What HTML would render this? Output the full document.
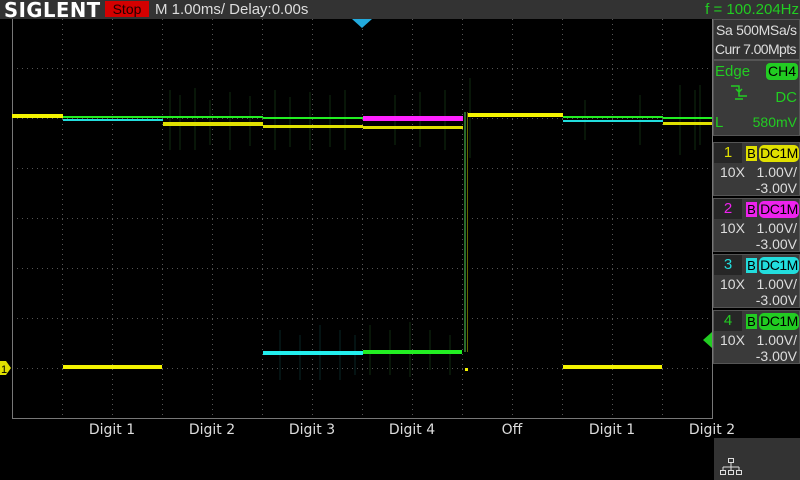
<!DOCTYPE html><html><head><style>
body{margin:0;width:800px;height:480px;background:#000;overflow:hidden;font-family:"DejaVu Sans","Liberation Sans",sans-serif;position:relative}
div{position:absolute;box-sizing:border-box}
.t{white-space:nowrap;line-height:1}
.L{font-family:"Liberation Sans",sans-serif}
.ch{left:713px;width:87px;height:54px;background:#3a3a3a;border:1px solid #555;font-family:"Liberation Sans",sans-serif}
.tab{left:0;top:0;width:28px;height:20px;background:#262626;font-size:15px;text-align:center;line-height:20px}
.b{left:32px;top:3px;width:11px;height:15px;font-size:13px;line-height:15px;text-align:center;color:#000}
.dc{left:45px;top:2px;width:40px;height:17px;border-radius:5px;font-size:14px;line-height:17px;text-align:center;color:#000;letter-spacing:-0.5px}
.r{color:#ddd;font-size:14px}
.rr{right:2px;text-align:right}
.lab{top:423px;color:#ddd;font-size:14px;width:100px;text-align:center}
</style></head><body>
<div style="left:0;top:0;width:800px;height:19px;background:#333"></div>
<div class="t" style="left:4px;top:0px;color:#fff;font-weight:bold;font-size:20px;letter-spacing:0.5px;font-family:'DejaVu Sans',sans-serif;transform:scaleX(0.98);transform-origin:left">SIGLENT</div>
<div style="left:105px;top:1px;width:44px;height:16px;background:#d40000;color:#200;font-size:14px;text-align:center;line-height:16px" class="L">Stop</div>
<div class="t L" style="left:155px;top:2px;color:#ddd;font-size:15px">M 1.00ms/ Delay:0.00s</div>
<div class="t L" style="right:1px;top:2px;color:#22cc22;font-size:15px">f = 100.204Hz</div>
<svg style="position:absolute;left:0;top:0" width="800" height="480">
<g stroke="#555" stroke-width="1" stroke-dasharray="1 4">
<line x1="62.5" y1="19" x2="62.5" y2="418"/><line x1="112.5" y1="19" x2="112.5" y2="418"/><line x1="162.5" y1="19" x2="162.5" y2="418"/><line x1="212.5" y1="19" x2="212.5" y2="418"/><line x1="262.5" y1="19" x2="262.5" y2="418"/><line x1="312.5" y1="19" x2="312.5" y2="418"/><line x1="362.5" y1="19" x2="362.5" y2="418"/><line x1="412.5" y1="19" x2="412.5" y2="418"/><line x1="462.5" y1="19" x2="462.5" y2="418"/><line x1="512.5" y1="19" x2="512.5" y2="418"/><line x1="562.5" y1="19" x2="562.5" y2="418"/><line x1="612.5" y1="19" x2="612.5" y2="418"/><line x1="662.5" y1="19" x2="662.5" y2="418"/>
<line x1="12" y1="68.5" x2="712" y2="68.5"/><line x1="12" y1="118.5" x2="712" y2="118.5"/><line x1="12" y1="168.5" x2="712" y2="168.5"/><line x1="12" y1="218.5" x2="712" y2="218.5"/><line x1="12" y1="268.5" x2="712" y2="268.5"/><line x1="12" y1="318.5" x2="712" y2="318.5"/><line x1="12" y1="368.5" x2="712" y2="368.5"/>
</g>
<path d="M12.5 19V418.5H712.5V19" stroke="#777" fill="none"/>
<g stroke-width="1" opacity="0.6">
<path d="M170 90v60M180 95v55M195 88v62M210 100v45M230 92v58M250 96v50M275 90v60M290 97v50M310 92v58M330 95v52M345 90v60M395 95v50M420 92v55M445 90v60M470 78v80M585 100v40M640 95v50M680 85v70M695 90v60M700 85v60" stroke="#1a4a1a"/>
<path d="M280 330v50M300 335v45M320 325v55M340 330v50M355 335v40" stroke="#0d4040"/>
<path d="M370 325v50M390 330v45M410 322v55M430 330v40M450 335v40" stroke="#1a4a1a"/>
</g>
<g>
<rect x="12" y="114" width="51" height="4" fill="#f4f400"/>
<rect x="63" y="116" width="100" height="2" fill="#22ee22"/><rect x="63" y="119" width="100" height="2" fill="#22dddd"/>
<rect x="163" y="116" width="100" height="2" fill="#22ee22"/><rect x="163" y="122" width="100" height="4" fill="#e0e000"/>
<rect x="263" y="117" width="100" height="2" fill="#22ee22"/><rect x="263" y="125" width="100" height="3" fill="#e0e000"/>
<rect x="363" y="116" width="100" height="5" fill="#ff22ff"/><rect x="363" y="126" width="100" height="3" fill="#e0e000"/>
<rect x="468" y="113" width="95" height="4" fill="#f4f400"/>
<rect x="563" y="116" width="100" height="2" fill="#22ee22"/><rect x="563" y="120" width="100" height="2" fill="#22dddd"/>
<rect x="663" y="117" width="49" height="2" fill="#22ee22"/><rect x="663" y="122" width="49" height="3" fill="#e0e000"/>
<rect x="464" y="112" width="2" height="240" fill="#2a6a2a"/><rect x="467" y="112" width="1" height="240" fill="#666600"/>
<rect x="63" y="365" width="99" height="4" fill="#f4f400"/>
<rect x="263" y="351" width="100" height="4" fill="#22eeee"/>
<rect x="363" y="350" width="99" height="4" fill="#22ee22"/>
<rect x="465" y="368" width="3" height="3" fill="#f4f400"/>
<rect x="563" y="365" width="99" height="4" fill="#f4f400"/>
</g>
<path d="M352 19h20l-10 9z" fill="#22aadd"/>
<path d="M0 361h6l5 7-5 7h-6z" fill="#e0e000"/><text x="1" y="373" font-size="11" fill="#000" font-family="Liberation Sans">1</text>
<path d="M712 332v16l-9-8z" fill="#22cc22"/>
</svg>
<div style="left:713px;top:19px;width:87px;height:41px;background:#333;border:1px solid #555"></div>
<div class="t r L" style="left:716px;top:23px;font-size:14px;letter-spacing:-0.3px">Sa 500MSa/s</div>
<div class="t r L" style="left:715px;top:42px;font-size:14px;letter-spacing:-0.6px">Curr 7.00Mpts</div>
<div style="left:713px;top:60px;width:87px;height:76px;background:#3a3a3a;border:1px solid #555"></div>
<div class="t L" style="left:715px;top:64px;color:#22cc22;font-size:15px">Edge</div>
<div class="L" style="left:766px;top:63px;width:32px;height:17px;background:#22cc22;border-radius:4px;font-size:14px;text-align:center;line-height:17px;color:#000">CH4</div>
<svg style="position:absolute;left:730px;top:84px" width="20" height="18"><path d="M1 2h8v10h8M9 8l-3-3M9 8l3-3M5 15h8" stroke="#22cc22" stroke-width="1.5" fill="none"/></svg>
<div class="t L" style="right:3px;top:90px;color:#22cc22;font-size:15px">DC</div>
<div class="t L" style="left:715px;top:115px;color:#22cc22;font-size:15px">L</div>
<div class="t L" style="right:3px;top:115px;color:#22cc22;font-size:14px">580mV</div>
<div class="ch" style="top:142px"><div class="tab" style="color:#e0e000">1</div><div class="b" style="background:#e0e000">B</div><div class="dc" style="background:#e0e000">DC1M</div><div class="t r" style="left:6px;top:22px">10X</div><div class="t r rr" style="top:22px">1.00V/</div><div class="t r rr" style="top:38px">-3.00V</div></div>
<div class="ch" style="top:198px"><div class="tab" style="color:#ee22ee">2</div><div class="b" style="background:#ee22ee">B</div><div class="dc" style="background:#ee22ee">DC1M</div><div class="t r" style="left:6px;top:22px">10X</div><div class="t r rr" style="top:22px">1.00V/</div><div class="t r rr" style="top:38px">-3.00V</div></div>
<div class="ch" style="top:254px"><div class="tab" style="color:#22dddd">3</div><div class="b" style="background:#22dddd">B</div><div class="dc" style="background:#22dddd">DC1M</div><div class="t r" style="left:6px;top:22px">10X</div><div class="t r rr" style="top:22px">1.00V/</div><div class="t r rr" style="top:38px">-3.00V</div></div>
<div class="ch" style="top:310px"><div class="tab" style="color:#22cc22">4</div><div class="b" style="background:#22cc22">B</div><div class="dc" style="background:#22cc22">DC1M</div><div class="t r" style="left:6px;top:22px">10X</div><div class="t r rr" style="top:22px">1.00V/</div><div class="t r rr" style="top:38px">-3.00V</div></div>
<div class="t lab" style="left:62px">Digit 1</div>
<div class="t lab" style="left:162px">Digit 2</div>
<div class="t lab" style="left:262px">Digit 3</div>
<div class="t lab" style="left:362px">Digit 4</div>
<div class="t lab" style="left:462px">Off</div>
<div class="t lab" style="left:562px">Digit 1</div>
<div class="t lab" style="left:662px">Digit 2</div>
<div style="left:714px;top:438px;width:86px;height:42px;background:#333"></div>
<svg style="position:absolute;left:720px;top:458px" width="22" height="18"><g stroke="#ddd" fill="none" stroke-width="1"><rect x="8.5" y="0.5" width="5" height="4"/><path d="M11 5v4M3 9h16M3 9v3M11 9v3M19 9v3"/><rect x="0.5" y="12.5" width="5" height="4"/><rect x="8.5" y="12.5" width="5" height="4"/><rect x="16.5" y="12.5" width="5" height="4"/></g></svg>
</body></html>
